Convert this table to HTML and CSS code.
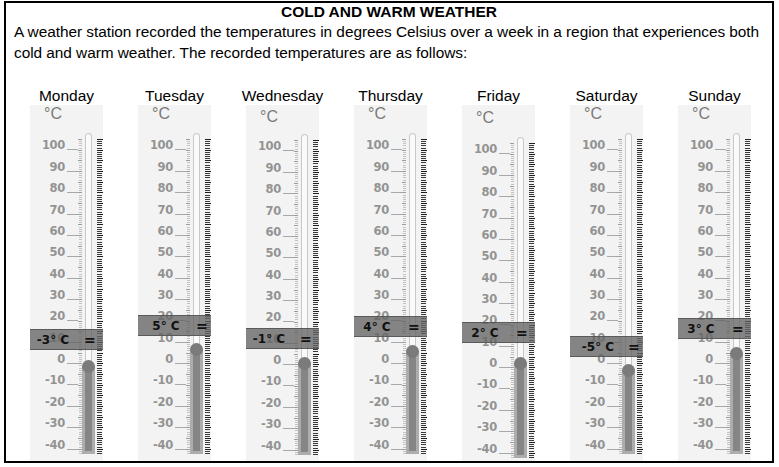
FILE: index.html
```html
<!DOCTYPE html>
<html>
<head>
<meta charset="utf-8">
<link rel="stylesheet" href="styles.css">
</head>
<body>
<div class="sheet">
  <h1 class="title">COLD AND WARM WEATHER</h1>
  <p class="intro">A weather station recorded the temperatures in degrees Celsius over a week in a region that experiences both<br>cold and warm weather. The recorded temperatures are as follows:</p>
  <div class="week">
    <div class="day">
      <div class="day-name">Monday</div>
      <div class="panel">
        <div class="unit">°C</div>
        <div class="scale">
          <div class="nums">
            <div class="n"><span>100</span><i></i></div><div class="n"><span>90</span><i></i></div><div class="n"><span>80</span><i></i></div><div class="n"><span>70</span><i></i></div><div class="n"><span>60</span><i></i></div><div class="n"><span>50</span><i></i></div><div class="n"><span>40</span><i></i></div><div class="n"><span>30</span><i></i></div><div class="n"><span>20</span><i></i></div><div class="n"><span>10</span><i></i></div><div class="n"><span>0</span><i></i></div><div class="n"><span>-10</span><i></i></div><div class="n"><span>-20</span><i></i></div><div class="n"><span>-30</span><i></i></div><div class="n"><span>-40</span><i></i></div>
          </div>
          <div class="minor"></div>
          <div class="tube"><div class="glass"><div class="fill" style="height:88px"></div></div></div>
          <div class="major"></div>
        </div>
        <div class="reading" style="top:224px"><b>-3° C</b><span class="eq">=</span></div>
      </div>
    </div>
    <div class="day">
      <div class="day-name">Tuesday</div>
      <div class="panel">
        <div class="unit">°C</div>
        <div class="scale">
          <div class="nums">
            <div class="n"><span>100</span><i></i></div><div class="n"><span>90</span><i></i></div><div class="n"><span>80</span><i></i></div><div class="n"><span>70</span><i></i></div><div class="n"><span>60</span><i></i></div><div class="n"><span>50</span><i></i></div><div class="n"><span>40</span><i></i></div><div class="n"><span>30</span><i></i></div><div class="n"><span>20</span><i></i></div><div class="n"><span>10</span><i></i></div><div class="n"><span>0</span><i></i></div><div class="n"><span>-10</span><i></i></div><div class="n"><span>-20</span><i></i></div><div class="n"><span>-30</span><i></i></div><div class="n"><span>-40</span><i></i></div>
          </div>
          <div class="minor"></div>
          <div class="tube"><div class="glass"><div class="fill" style="height:105px"></div></div></div>
          <div class="major"></div>
        </div>
        <div class="reading" style="top:210px"><b class="wide">5° C</b><span class="eq">=</span></div>
      </div>
    </div>
    <div class="day">
      <div class="day-name">Wednesday</div>
      <div class="panel panel-mid">
        <div class="unit">°C</div>
        <div class="scale">
          <div class="nums">
            <div class="n"><span>100</span><i></i></div><div class="n"><span>90</span><i></i></div><div class="n"><span>80</span><i></i></div><div class="n"><span>70</span><i></i></div><div class="n"><span>60</span><i></i></div><div class="n"><span>50</span><i></i></div><div class="n"><span>40</span><i></i></div><div class="n"><span>30</span><i></i></div><div class="n"><span>20</span><i></i></div><div class="n"><span>10</span><i></i></div><div class="n"><span>0</span><i></i></div><div class="n"><span>-10</span><i></i></div><div class="n"><span>-20</span><i></i></div><div class="n"><span>-30</span><i></i></div><div class="n"><span>-40</span><i></i></div>
          </div>
          <div class="minor"></div>
          <div class="tube"><div class="glass"><div class="fill" style="height:92px"></div></div></div>
          <div class="major"></div>
        </div>
        <div class="reading" style="top:223px"><b>-1° C</b><span class="eq">=</span></div>
      </div>
    </div>
    <div class="day">
      <div class="day-name">Thursday</div>
      <div class="panel">
        <div class="unit">°C</div>
        <div class="scale">
          <div class="nums">
            <div class="n"><span>100</span><i></i></div><div class="n"><span>90</span><i></i></div><div class="n"><span>80</span><i></i></div><div class="n"><span>70</span><i></i></div><div class="n"><span>60</span><i></i></div><div class="n"><span>50</span><i></i></div><div class="n"><span>40</span><i></i></div><div class="n"><span>30</span><i></i></div><div class="n"><span>20</span><i></i></div><div class="n"><span>10</span><i></i></div><div class="n"><span>0</span><i></i></div><div class="n"><span>-10</span><i></i></div><div class="n"><span>-20</span><i></i></div><div class="n"><span>-30</span><i></i></div><div class="n"><span>-40</span><i></i></div>
          </div>
          <div class="minor"></div>
          <div class="tube"><div class="glass"><div class="fill" style="height:103px"></div></div></div>
          <div class="major"></div>
        </div>
        <div class="reading" style="top:211px"><b>4° C</b><span class="eq">=</span></div>
      </div>
    </div>
    <div class="day">
      <div class="day-name">Friday</div>
      <div class="panel panel-low">
        <div class="unit">°C</div>
        <div class="scale">
          <div class="nums">
            <div class="n"><span>100</span><i></i></div><div class="n"><span>90</span><i></i></div><div class="n"><span>80</span><i></i></div><div class="n"><span>70</span><i></i></div><div class="n"><span>60</span><i></i></div><div class="n"><span>50</span><i></i></div><div class="n"><span>40</span><i></i></div><div class="n"><span>30</span><i></i></div><div class="n"><span>20</span><i></i></div><div class="n"><span>10</span><i></i></div><div class="n"><span>0</span><i></i></div><div class="n"><span>-10</span><i></i></div><div class="n"><span>-20</span><i></i></div><div class="n"><span>-30</span><i></i></div><div class="n"><span>-40</span><i></i></div>
          </div>
          <div class="minor"></div>
          <div class="tube"><div class="glass"><div class="fill" style="height:95px"></div></div></div>
          <div class="major"></div>
        </div>
        <div class="reading" style="top:217px"><b>2° C</b><span class="eq">=</span></div>
      </div>
    </div>
    <div class="day">
      <div class="day-name">Saturday</div>
      <div class="panel">
        <div class="unit">°C</div>
        <div class="scale">
          <div class="nums">
            <div class="n"><span>100</span><i></i></div><div class="n"><span>90</span><i></i></div><div class="n"><span>80</span><i></i></div><div class="n"><span>70</span><i></i></div><div class="n"><span>60</span><i></i></div><div class="n"><span>50</span><i></i></div><div class="n"><span>40</span><i></i></div><div class="n"><span>30</span><i></i></div><div class="n"><span>20</span><i></i></div><div class="n"><span>10</span><i></i></div><div class="n"><span>0</span><i></i></div><div class="n"><span>-10</span><i></i></div><div class="n"><span>-20</span><i></i></div><div class="n"><span>-30</span><i></i></div><div class="n"><span>-40</span><i></i></div>
          </div>
          <div class="minor"></div>
          <div class="tube"><div class="glass"><div class="fill" style="height:84px"></div></div></div>
          <div class="major"></div>
        </div>
        <div class="reading" style="top:231px"><b class="wide">-5° C</b><span class="eq">=</span></div>
      </div>
    </div>
    <div class="day">
      <div class="day-name">Sunday</div>
      <div class="panel">
        <div class="unit">°C</div>
        <div class="scale">
          <div class="nums">
            <div class="n"><span>100</span><i></i></div><div class="n"><span>90</span><i></i></div><div class="n"><span>80</span><i></i></div><div class="n"><span>70</span><i></i></div><div class="n"><span>60</span><i></i></div><div class="n"><span>50</span><i></i></div><div class="n"><span>40</span><i></i></div><div class="n"><span>30</span><i></i></div><div class="n"><span>20</span><i></i></div><div class="n"><span>10</span><i></i></div><div class="n"><span>0</span><i></i></div><div class="n"><span>-10</span><i></i></div><div class="n"><span>-20</span><i></i></div><div class="n"><span>-30</span><i></i></div><div class="n"><span>-40</span><i></i></div>
          </div>
          <div class="minor"></div>
          <div class="tube"><div class="glass"><div class="fill" style="height:101px"></div></div></div>
          <div class="major"></div>
        </div>
        <div class="reading" style="top:213px"><b>3° C</b><span class="eq">=</span></div>
      </div>
    </div>
  </div>
</div>
</body>
</html>
```

FILE: styles.css
```css
html, body {
  margin: 0;
  padding: 0;
  background: #fff;
}

.sheet {
  box-sizing: border-box;
  width: 770px;
  height: 462px;
  margin: 1px 0 0 4px;
  border: 2px solid #000;
  overflow: hidden;
  font-family: "Liberation Sans", Arial, sans-serif;
  color: #000;
}

.title {
  margin: 0;
  font-size: 15.5px;
  line-height: 18px;
  font-weight: bold;
  text-align: center;
}

.intro {
  margin: 0;
  padding: 0 0 0 8px;
  font-size: 15.4px;
  letter-spacing: -0.04px;
  line-height: 21px;
  white-space: nowrap;
}

.week {
  display: flex;
  gap: 35px;
  padding: 23px 0 0 24px;
}

.day {
  width: 73px;
  display: flex;
  flex-direction: column;
  align-items: center;
}

.day-name {
  font-size: 15.5px;
  line-height: 19px;
  white-space: nowrap;
}

.panel {
  position: relative;
  width: 73px;
  height: 360px;
  background: #f3f3f3;
  box-sizing: border-box;
}

.panel-low {
  padding-top: 4px;
}

.panel-mid {
  padding-top: 1px;
}

.unit {
  height: 26px;
  padding-left: 14px;
  font-size: 16px;
  line-height: 18px;
  color: #7a7a7a;
}

.panel-mid .unit {
  padding-top: 2px;
  height: 24px;
}

.scale {
  display: flex;
  height: 328px;
}

.nums {
  width: 48px;
  padding-top: 4.3px;
}

.n {
  height: 21.36px;
  display: flex;
  align-items: center;
  justify-content: flex-end;
}

.n span {
  font-family: "DejaVu Sans", Verdana, sans-serif;
  font-weight: bold;
  font-size: 11.5px;
  line-height: 13px;
  color: #939393;
  letter-spacing: -0.3px;
}

.n i {
  display: block;
  width: 11px;
  height: 1px;
  margin: 8px 0 0 2px;
  background: #a8a8a8;
}

.minor {
  width: 4px;
  margin-top: 8px;
  height: 315px;
  background:
    repeating-linear-gradient(to bottom, #9c9c9c 0, #9c9c9c 1px, transparent 1px, transparent 10.68px),
    repeating-linear-gradient(to bottom, #c2c2c2 0, #c2c2c2 1px, transparent 1px, transparent 2.136px) right top / 3px 100% no-repeat;
}

.tube {
  width: 13px;
  margin-top: 2px;
  height: 321px;
  padding: 0 3px;
  box-sizing: border-box;
  display: flex;
}

.glass {
  flex: 1;
  border: 1px solid #c9c9c9;
  border-bottom: 0;
  border-radius: 4px 4px 0 0;
  background: #fafafa;
  display: flex;
  flex-direction: column;
  justify-content: flex-end;
}

.fill {
  position: relative;
  margin: 0 -4px;
  box-sizing: border-box;
  border: 3px solid #adadad;
  border-top: 0;
  background: #858585;
}

.fill::before {
  content: "";
  position: absolute;
  top: -6px;
  left: -3px;
  width: 13px;
  height: 13px;
  border-radius: 50%;
  background: #7b7b7b;
}

.major {
  width: 6px;
  margin: 8px 0 0 2px;
  height: 315px;
  background:
    repeating-linear-gradient(to bottom, #1e1e1e 0, #1e1e1e 1px, transparent 1px, transparent 10.68px),
    repeating-linear-gradient(to bottom, #3a3a3a 0, #3a3a3a 1px, transparent 1px, transparent 2.136px) left top / 5px 100% no-repeat;
}

.reading {
  position: absolute;
  left: 0;
  width: 73px;
  height: 21px;
  box-sizing: border-box;
  display: flex;
  align-items: center;
  background: rgba(100, 100, 100, 0.78);
  border-top: 1px solid rgba(80, 80, 80, 0.8);
  border-bottom: 1px solid #5a5a5a;
}

.reading b {
  width: 46px;
  text-align: center;
  font-family: "DejaVu Sans", Verdana, sans-serif;
  font-weight: bold;
  font-size: 12px;
  color: #111;
  white-space: nowrap;
}

.reading b.wide {
  width: 56px;
}

.reading .eq {
  margin-left: 8px;
  font-family: "DejaVu Sans", Verdana, sans-serif;
  font-weight: bold;
  font-size: 14px;
  color: #111;
}

.reading b.wide + .eq {
  margin-left: 2px;
}
```
